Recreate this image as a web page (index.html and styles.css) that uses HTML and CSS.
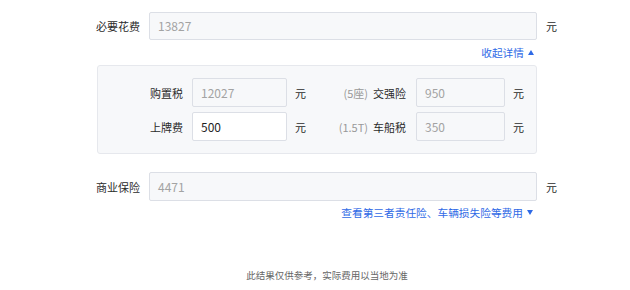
FILE: index.html
```html
<!DOCTYPE html>
<html lang="zh-CN">
<head>
    <meta charset="UTF-8">
    <title>费用计算</title>
    <link rel="stylesheet" href="styles.css">
</head>
<body>
    <div class="calc">
        <div class="row">
            <span class="row-label">必要花费</span>
            <div class="field field-wide">13827</div>
            <span class="unit">元</span>
        </div>
        <div class="toggle"><a class="link">收起详情<i class="arrow-up"></i></a></div>

        <div class="panel">
            <div class="panel-row">
                <span class="pl">购置税</span>
                <div class="field field-sm">12027</div>
                <span class="unit">元</span>
                <span class="pl2"><em>(5座)</em>交强险</span>
                <div class="field field-xs">950</div>
                <span class="unit">元</span>
            </div>
            <div class="panel-row">
                <span class="pl">上牌费</span>
                <div class="field field-sm editable">500</div>
                <span class="unit">元</span>
                <span class="pl2"><em>(1.5T)</em>车船税</span>
                <div class="field field-xs">350</div>
                <span class="unit">元</span>
            </div>
        </div>

        <div class="row row-ins">
            <span class="row-label">商业保险</span>
            <div class="field field-wide">4471</div>
            <span class="unit">元</span>
        </div>
        <div class="toggle toggle-ins"><a class="link">查看第三者责任险、车辆损失险等费用<i class="arrow-down"></i></a></div>

        <p class="note">此结果仅供参考，实际费用以当地为准</p>
    </div>
</body>
</html>
```

FILE: styles.css
```css
body {
    margin: 0;
    font-family: "Noto Sans CJK SC", "Noto Sans", sans-serif;
    font-size: 11px;
    color: #2b2b2b;
    background: #fff;
}

.calc {
    width: 630px;
    padding-top: 12px;
}

.row {
    display: flex;
    align-items: center;
    height: 28px;
}

.row-label {
    width: 149px;
    padding-right: 9px;
    box-sizing: border-box;
    text-align: right;
}

.field {
    box-sizing: border-box;
    height: 29px;
    line-height: 27px;
    padding-left: 8px;
    border: 1px solid #dcdfe6;
    border-radius: 2px;
    background: #f7f8fa;
    color: #a3a3a3;
    font-size: 12px;
}

.row .field {
    height: 28px;
    line-height: 26px;
}

.field-wide {
    width: 388px;
}

.unit {
    margin-left: 9px;
}

.toggle {
    height: 16px;
    line-height: 16px;
    margin-top: 5px;
    padding-right: 96px;
    text-align: right;
    font-size: 10.7px;
}

.link {
    color: #2f6ae6;
    cursor: pointer;
}

.arrow-up,
.arrow-down {
    display: inline-block;
    width: 0;
    height: 0;
    margin-left: 4px;
    border-left: 3.5px solid transparent;
    border-right: 3.5px solid transparent;
    vertical-align: 2px;
}

.arrow-up {
    border-bottom: 5px solid #2f6ae6;
}

.arrow-down {
    border-top: 5px solid #2f6ae6;
}

.panel {
    width: 440px;
    margin: 4px 0 0 97px;
    padding: 12px 0;
    box-sizing: border-box;
    border: 1px solid #e6e8ed;
    border-radius: 3px;
    background: #f7f8fa;
}

.panel-row {
    display: flex;
    align-items: center;
    height: 29px;
}

.panel-row + .panel-row {
    margin-top: 5px;
}

.pl {
    width: 85px;
    text-align: right;
}

.panel-row .field {
    margin-left: 9px;
}

.field-sm {
    width: 95px;
}

.field-xs {
    width: 89px;
}

.panel-row .unit {
    width: 12px;
    margin-left: 8px;
}

.pl2 {
    width: 99px;
    text-align: right;
}

.pl2 em {
    font-style: normal;
    color: #999;
    margin-right: 5px;
}

.panel-row .pl2 + .field {
    margin-left: 10px;
}

.editable {
    background: #fff;
    color: #1f1f1f;
}

.row-ins {
    margin-top: 18px;
    height: 29px;
}

.row-ins .field {
    height: 29px;
    line-height: 27px;
}

.toggle-ins {
    margin-top: 4px;
    padding-right: 97px;
}

.note {
    margin: 47px 0 0;
    padding-left: 24px;
    text-align: center;
    font-size: 9.5px;
    line-height: 14px;
    color: #666;
}
```
